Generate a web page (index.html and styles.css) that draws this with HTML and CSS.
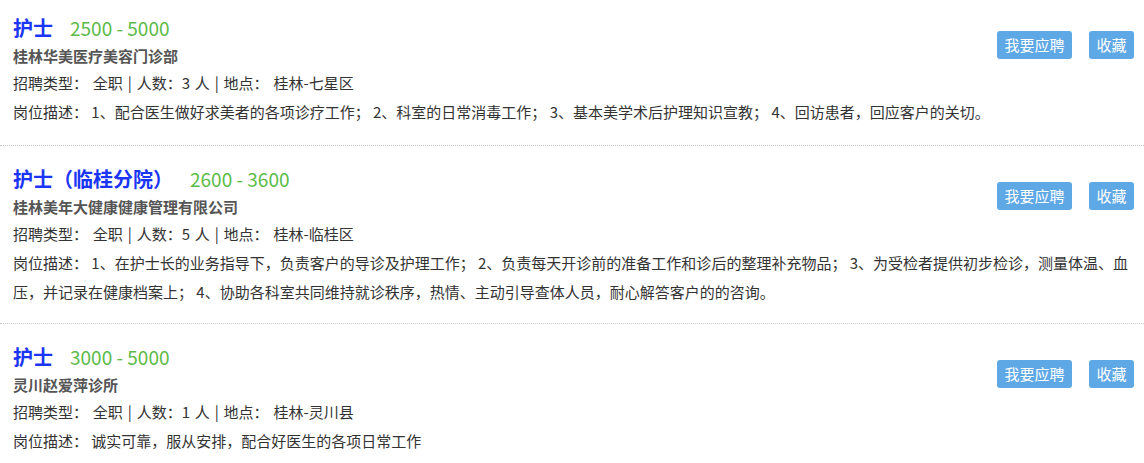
FILE: index.html
```html
<!DOCTYPE html>
<html lang="zh-CN">

<head>
    <meta charset="UTF-8">
    <meta name="viewport" content="width=device-width, initial-scale=1.0">
    <title>招聘信息</title>
    <link rel="stylesheet" href="styles.css">
</head>

<body>
    <div class="job-list">
        <div class="job-item">
            <div class="job-head">
                <div class="job-info">
                    <h3 class="job-title">护士<span class="salary">2500 - 5000</span></h3>
                    <p class="company">桂林华美医疗美容门诊部</p>
                    <p class="meta">招聘类型： 全职 | 人数：3 人 | 地点： 桂林-七星区</p>
                </div>
                <div class="job-actions">
                    <button type="button" class="btn">我要应聘</button>
                    <button type="button" class="btn">收藏</button>
                </div>
            </div>
            <p class="desc">岗位描述： 1、配合医生做好求美者的各项诊疗工作； 2、科室的日常消毒工作； 3、基本美学术后护理知识宣教； 4、回访患者，回应客户的关切。</p>
        </div>

        <div class="job-item">
            <div class="job-head">
                <div class="job-info">
                    <h3 class="job-title">护士（临桂分院）<span class="salary">2600 - 3600</span></h3>
                    <p class="company">桂林美年大健康健康管理有限公司</p>
                    <p class="meta">招聘类型： 全职 | 人数：5 人 | 地点： 桂林-临桂区</p>
                </div>
                <div class="job-actions">
                    <button type="button" class="btn">我要应聘</button>
                    <button type="button" class="btn">收藏</button>
                </div>
            </div>
            <p class="desc">岗位描述： 1、在护士长的业务指导下，负责客户的导诊及护理工作； 2、负责每天开诊前的准备工作和诊后的整理补充物品； 3、为受检者提供初步检诊，测量体温、血压，并记录在健康档案上； 4、协助各科室共同维持就诊秩序，热情、主动引导查体人员，耐心解答客户的的咨询。</p>
        </div>

        <div class="job-item">
            <div class="job-head">
                <div class="job-info">
                    <h3 class="job-title">护士<span class="salary">3000 - 5000</span></h3>
                    <p class="company">灵川赵爱萍诊所</p>
                    <p class="meta">招聘类型： 全职 | 人数：1 人 | 地点： 桂林-灵川县</p>
                </div>
                <div class="job-actions">
                    <button type="button" class="btn">我要应聘</button>
                    <button type="button" class="btn">收藏</button>
                </div>
            </div>
            <p class="desc">岗位描述： 诚实可靠，服从安排，配合好医生的各项日常工作</p>
        </div>
    </div>
</body>

</html>
```

FILE: styles.css
```css
body {
    font-family: "Noto Sans CJK SC", "Microsoft YaHei", sans-serif;
    margin: 0;
    background: #fff;
    color: #333;
    overflow: hidden;
}

.job-list {
    margin-top: -5px;
}

.job-item {
    padding: 17px 10px 17px 13px;
    border-bottom: 1px dotted #c8c8c8;
}

.job-item:first-child {
    padding-bottom: 19px;
}

.job-head {
    display: flex;
    justify-content: space-between;
    align-items: flex-start;
}

.job-title {
    margin: 0;
    font-size: 20px;
    line-height: 32px;
    font-weight: bold;
    color: #1a35f5;
}

.salary {
    margin-left: 17px;
    font-size: 19px;
    font-weight: normal;
    color: #5cbb48;
}

.company {
    margin: 0;
    font-size: 15px;
    line-height: 24px;
    font-weight: bold;
    color: #555;
}

.meta {
    margin: 0;
    font-size: 15px;
    line-height: 29px;
    word-spacing: 1.5px;
}

.desc {
    margin: 0;
    font-size: 15px;
    line-height: 29px;
}

.job-actions {
    display: flex;
    gap: 17px;
    margin-top: 19px;
}

.btn {
    height: 28px;
    padding: 0 7.5px;
    font-family: inherit;
    font-size: 15px;
    line-height: 28px;
    color: #fff;
    background: #5ea8e6;
    border: none;
    border-radius: 3px;
    cursor: pointer;
}
```
